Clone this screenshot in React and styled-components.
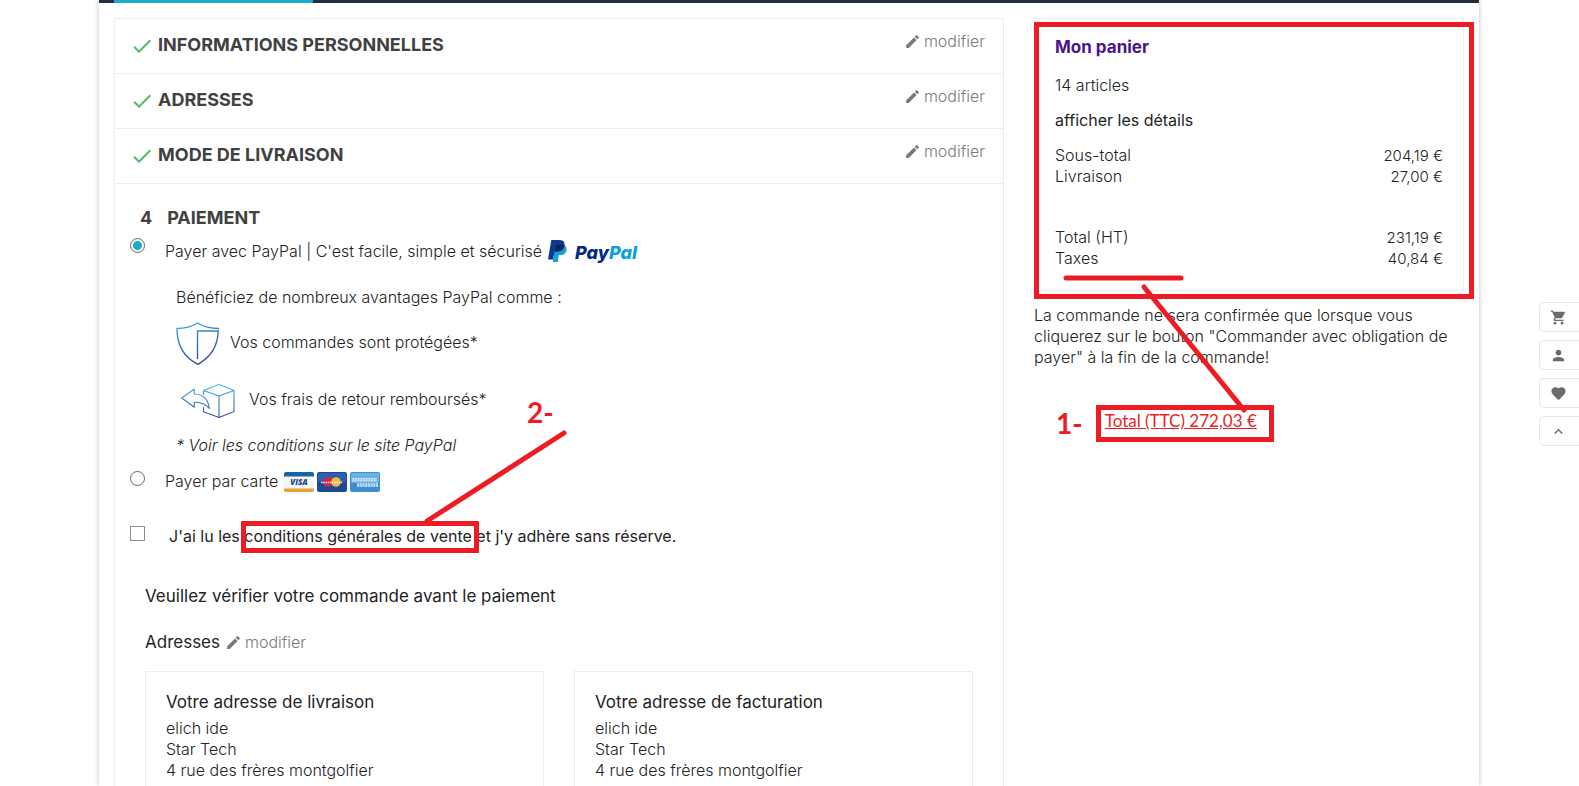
import React from "react";
import styled, { createGlobalStyle, css } from "styled-components";
import {
  MdDone,
  MdEdit,
  MdShoppingCart,
  MdPerson,
  MdFavorite,
  MdKeyboardArrowUp,
} from "react-icons/md";

const RED = "#ed1c24";
const LINE = "#ececec";

const GlobalStyle = createGlobalStyle`
  *, *::before, *::after { box-sizing: border-box; }
  body {
    margin: 0;
    padding-right: 1px;
    background: #fff;
    color: #232323;
    font: 300 16px/21px Inter, "Open Sans", sans-serif;
  }
  h1, h2, h3, p, dl, dd, dt, address { margin: 0; font-style: normal; }
  a { color: inherit; text-decoration: none; }
`;

const Page = styled.div`
  max-width: 1380px;
  min-height: 100vh;
  margin: 0 auto;
  background: #fff;
  box-shadow: 0 0 5px rgba(0, 0, 0, 0.25);
`;

const NavBar = styled.div`
  height: 3px;
  padding-left: 15px;
  background: #232f3e;
`;

const NavActive = styled.div`
  width: 199px;
  height: 3px;
  background: #1aaccb;
`;

const Columns = styled.div`
  display: grid;
  grid-template-columns: 2fr 1fr;
  padding-top: 15px;
`;

const MainColumn = styled.main`
  min-width: 0;
  padding: 0 15px;
`;

const SideColumn = styled.aside`
  min-width: 0;
  padding: 0 15px;
`;

const Steps = styled.div`
  border: 1px solid ${LINE};
  border-bottom: 0;
`;

const StepRow = styled.section`
  display: flex;
  align-items: center;
  gap: 4px;
  height: 55px;
  padding: 0 18px 0 15px;
  border-bottom: 1px solid ${LINE};
  > svg { color: #4cbb6c; }
`;

const StepTitle = styled.h1`
  padding-bottom: 3px;
  font-size: 18px;
  line-height: 24px;
  font-weight: 700;
  color: #414141;
`;

const EditLink = styled.a`
  display: inline-flex;
  align-items: center;
  gap: 3px;
  color: #7a7a7a;
  ${(p) => p.$corner && css`
    align-self: flex-start;
    margin: 12px 0 0 auto;
  `}
`;

const Payment = styled.section`
  padding: 22px 15px 0;
`;

const PaymentTitle = styled(StepTitle)`
  display: flex;
  gap: 15px;
  padding-left: 10px;
  margin-bottom: 5px;
`;

const Choice = styled.div`
  position: relative;
  display: flex;
  align-items: flex-start;
  gap: ${(p) => p.$gap || 20}px;
  margin-top: ${(p) => p.$top || 0}px;
`;

const Radio = styled.input.attrs({ type: "radio", name: "payment" })`
  appearance: none;
  flex: none;
  width: 15px;
  height: 15px;
  margin: 0;
  border: 1px solid #666;
  border-radius: 50%;
  &:checked { background: radial-gradient(circle, #1aaccb 4px, #fff 5px); }
`;

const Checkbox = styled.input.attrs({ type: "checkbox" })`
  appearance: none;
  flex: none;
  width: 15px;
  height: 15px;
  margin: 0;
  border: 1px solid #8c8c8c;
`;

const ChoiceLabel = styled.label`
  display: flex;
  align-items: center;
  gap: 6px;
  padding-top: ${(p) => p.$top || 0}px;
`;

const TermsLabel = styled.label`
  font-weight: 400;
`;

const TermsLink = styled.a`
  position: relative;
  &::after {
    content: "";
    position: absolute;
    inset: -5px -7px -7px -3px;
    border: 5px solid ${RED};
  }
`;

const Benefits = styled.div`
  padding: 25px 0 0 46px;
`;

const Benefit = styled.p`
  display: flex;
  align-items: center;
  gap: ${(p) => p.$gap}px;
  margin-top: ${(p) => p.$top}px;
  padding-left: ${(p) => p.$left || 0}px;
  span { padding-bottom: 3px; }
`;

const Footnote = styled.p`
  margin-top: 17px;
  font-style: italic;
`;

const CardList = styled.span`
  display: flex;
  gap: 3px;
`;

const PayPalBrand = styled.span`
  display: flex;
  align-items: center;
  gap: 8px;
`;

const PayPalName = styled.strong`
  padding-top: 3px;
  font-size: 18px;
  line-height: 19px;
  font-weight: 800;
  font-style: italic;
  color: #012b82;
  span { color: #0d9fe0; }
`;

const Review = styled.section`
  padding: 39px 15px 0;
`;

const ReviewTitle = styled.h2`
  font-size: 17px;
  line-height: 21px;
  font-weight: 400;
`;

const ReviewLine = styled.div`
  display: flex;
  gap: 5px;
  margin: 25px 0 18px;
`;

const AddressGrid = styled.div`
  display: grid;
  grid-template-columns: 1fr 1fr;
  gap: 30px;
`;

const AddressCard = styled.article`
  padding: 20px 20px 5px;
  border: 1px solid ${LINE};
  border-bottom: 0;
  address { margin-top: 5px; }
`;

const Cart = styled.section`
  position: relative;
  padding: 18px 20px 21px;
  border: 1px solid ${LINE};
  &::after {
    content: "";
    position: absolute;
    inset: 3px -11px -9px -1px;
    border: 5px solid ${RED};
    pointer-events: none;
  }
`;

const CartTitle = styled.h2`
  font-size: 17px;
  line-height: 21px;
  font-weight: 700;
  color: #4b1489;
`;

const CartCount = styled.p`
  margin: 17px 0 14px;
`;

const DetailsLink = styled.a`
  display: block;
  font-weight: 400;
`;

const Amounts = styled.dl`
  margin-top: ${(p) => p.$top}px;
`;

const Amount = styled.div`
  display: flex;
  justify-content: space-between;
  dd { font-size: 15px; }
`;

const Notice = styled.p`
  margin-top: 14px;
`;

const Callout = styled.div`
  display: flex;
  align-items: flex-start;
  gap: 13px;
  margin-top: 37px;
  padding-left: 22px;
`;

const CalloutNumber = styled.strong`
  font: 700 28px/36px Lato, sans-serif;
  color: ${RED};
`;

const CalloutBox = styled.span`
  height: 37px;
  padding: 0 12px 0 4px;
  border: 5px solid ${RED};
  font: 400 17px/22px Lato, sans-serif;
  color: ${RED};
  text-decoration: underline;
  white-space: nowrap;
`;

const Stroke = styled.svg`
  position: absolute;
  left: ${(p) => p.$left}px;
  top: ${(p) => p.$top}px;
  overflow: visible;
  pointer-events: none;
  z-index: 1;
  stroke: ${RED};
  stroke-width: 5;
  stroke-linecap: round;
`;

const FloatingNumber = styled(CalloutNumber)`
  position: absolute;
  left: 397px;
  top: -132px;
`;

const QuickBar = styled.nav`
  position: fixed;
  right: 0;
  top: 302px;
  display: grid;
  gap: 8px;
`;

const QuickButton = styled.button`
  display: flex;
  align-items: center;
  justify-content: center;
  width: 40px;
  height: 30px;
  padding: 0 2px 0 0;
  border: 1px solid #e8e8e8;
  border-right: 0;
  border-radius: 5px 0 0 5px;
  background: #fff;
  color: #6b6b6b;
`;

function PayPalMark() {
  return (
    <svg width="19" height="22" viewBox="0 0 19 22" aria-hidden="true">
      <path d="M7 5h8.500c2.400.8 3.500 2.500 3 5.100-.7 3.700-3 5-6.400 5h-1.200l-1.200 6.900H4.800z" fill="#159fdf" />
      <path d="M3.300 0h7.900c4 0 5.900 1.900 5.200 5.600-.7 4-3.300 5.800-7.200 5.800H6.500L5 19.500H0z" fill="#0a3a8c" />
      <path d="M8.200 5h8.200c-.3 4.600-3.200 6.500-7.200 6.400H7z" fill="#041f5c" />
    </svg>
  );
}

function Shield() {
  return (
    <svg width="43" height="43" viewBox="0 0 43 43" fill="none" stroke="url(#shieldInk)" strokeWidth="1.400" aria-hidden="true">
      <defs>
        <linearGradient id="shieldInk" gradientUnits="userSpaceOnUse" x1="8" y1="0" x2="22" y2="43">
          <stop offset="0" stopColor="#36b1dc" />
          <stop offset=".5" stopColor="#3277b3" />
          <stop offset="1" stopColor="#30479b" />
        </linearGradient>
      </defs>
      <path d="M43 6.500C34 6.500 28 5 21.500 1 15 5 9 6.500 1 6.500 1 22 7 35 22 42.300 36 34 41.500 24 42.300 9H21.500v28" />
    </svg>
  );
}

function ReturnParcel() {
  return (
    <svg width="54" height="34" viewBox="0 0 54 34" fill="none" stroke="url(#parcelInk)" strokeWidth="1.100" strokeLinejoin="round" aria-hidden="true">
      <defs>
        <linearGradient id="parcelInk" gradientUnits="userSpaceOnUse" x1="0" y1="0" x2="0" y2="34">
          <stop offset="0" stopColor="#4fc0e4" />
          <stop offset=".5" stopColor="#3f7fba" />
          <stop offset="1" stopColor="#3a4a99" />
        </linearGradient>
      </defs>
      <path d="M22.500 11V6.500l15.500-6 15 6v21L38 33.400l-15.500-5.600V23M22.500 6.500 38 12l15-5.500M38 12v21.400" />
      <path d="M.7 14 13.300 5v5c8 .4 14 4.500 15 14.500-4-5-8-6.600-15-6.200v5z" />
    </svg>
  );
}

function VisaCard() {
  return (
    <svg width="30" height="20" viewBox="0 0 30 20" role="img" aria-label="Visa">
      <rect width="30" height="20" rx="2" fill="#f6f6f4" />
      <path d="M0 4.500V2a2 2 0 0 1 2-2h26a2 2 0 0 1 2 2v2.500z" fill="#17649f" />
      <path d="M0 16.500V18a2 2 0 0 0 2 2h26a2 2 0 0 0 2-2v-1.500z" fill="#eb9f32" />
      <text x="15" y="13" textAnchor="middle" fontFamily="Open Sans, sans-serif" fontSize="8" fontWeight="800" fontStyle="italic" fill="#1b4a86">VISA</text>
    </svg>
  );
}

function MasterCard() {
  return (
    <svg width="30" height="20" viewBox="0 0 30 20" role="img" aria-label="MasterCard">
      <rect width="30" height="20" rx="2" fill="#1d4a92" />
      <rect x="1" y="1" width="28" height="9" rx="1" fill="#2c62ad" />
      <circle cx="11" cy="10" r="4.800" fill="#d8243c" />
      <circle cx="19" cy="10" r="4.800" fill="#f3b83c" />
      <path d="M4 10.500h22" stroke="#f4e9ea" strokeWidth="1.600" strokeDasharray="1.500 .7" />
    </svg>
  );
}

function AmexCard() {
  return (
    <svg width="30" height="20" viewBox="0 0 30 20" role="img" aria-label="American Express">
      <rect width="30" height="20" rx="2" fill="#3f8fd0" />
      <rect x="1" y="1" width="28" height="10" rx="1" fill="#69b3e6" />
      <path d="M2 7.800h25M7 13h21" stroke="#d5eafa" strokeWidth="3.400" strokeDasharray="2.100 .6" />
      <path d="M2 7.800h25M7 13h21" stroke="#5aa3da" strokeWidth="1" strokeDasharray="1 1.700" />
    </svg>
  );
}

const doneSteps = ["INFORMATIONS PERSONNELLES", "ADRESSES", "MODE DE LIVRAISON"];
const addresses = ["Votre adresse de livraison", "Votre adresse de facturation"];
const quickActions = [
  ["Panier", MdShoppingCart],
  ["Compte", MdPerson],
  ["Favoris", MdFavorite],
  ["Haut de page", MdKeyboardArrowUp],
];

function Edit({ corner }) {
  return (
    <EditLink href="#modifier" $corner={corner}>
      <MdEdit size={17} />
      modifier
    </EditLink>
  );
}

function AmountRow({ label, value }) {
  return (
    <Amount>
      <dt>{label}</dt>
      <dd>{value}</dd>
    </Amount>
  );
}

export default function App() {
  return (
    <>
      <GlobalStyle />
      <Page>
        <NavBar><NavActive /></NavBar>
        <Columns>
          <MainColumn>
            <Steps>
              {doneSteps.map((title) => (
                <StepRow key={title}>
                  <MdDone size={24} />
                  <StepTitle>{title}</StepTitle>
                  <Edit corner />
                </StepRow>
              ))}
              <Payment>
                <PaymentTitle><span>4</span>PAIEMENT</PaymentTitle>
                <Choice>
                  <Radio id="paypal" defaultChecked />
                  <ChoiceLabel htmlFor="paypal" $top={2}>
                    Payer avec PayPal | C'est facile, simple et sécurisé
                    <PayPalBrand>
                      <PayPalMark />
                      <PayPalName>Pay<span>Pal</span></PayPalName>
                    </PayPalBrand>
                  </ChoiceLabel>
                </Choice>
                <Benefits>
                  <p>Bénéficiez de nombreux avantages PayPal comme :</p>
                  <Benefit $top={14} $gap={11}><Shield /><span>Vos commandes sont protégées*</span></Benefit>
                  <Benefit $top={19} $gap={14} $left={5}><ReturnParcel /><span>Vos frais de retour remboursés*</span></Benefit>
                  <Footnote>* Voir les conditions sur le site PayPal</Footnote>
                </Benefits>
                <Choice $top={15}>
                  <Radio id="card" />
                  <ChoiceLabel htmlFor="card">
                    Payer par carte
                    <CardList><VisaCard /><MasterCard /><AmexCard /></CardList>
                  </ChoiceLabel>
                </Choice>
                <Choice $top={34} $gap={24}>
                  <Checkbox id="terms" />
                  <TermsLabel htmlFor="terms">
                    J'ai lu les <TermsLink href="#conditions">conditions générales de vente</TermsLink> et j'y adhère sans réserve.
                  </TermsLabel>
                  <FloatingNumber>2-</FloatingNumber>
                  <Stroke $left={297} $top={-93} width="137" height="88"><path d="M0 88 137 0" /></Stroke>
                </Choice>
                <Review>
                  <ReviewTitle>Veuillez vérifier votre commande avant le paiement</ReviewTitle>
                  <ReviewLine>
                    <ReviewTitle as="h3">Adresses</ReviewTitle>
                    <Edit />
                  </ReviewLine>
                  <AddressGrid>
                    {addresses.map((title) => (
                      <AddressCard key={title}>
                        <ReviewTitle as="h3">{title}</ReviewTitle>
                        <address>
                          elich ide<br />Star Tech<br />4 rue des frères montgolfier
                        </address>
                      </AddressCard>
                    ))}
                  </AddressGrid>
                </Review>
              </Payment>
            </Steps>
          </MainColumn>
          <SideColumn>
            <Cart>
              <CartTitle>Mon panier</CartTitle>
              <CartCount>14 articles</CartCount>
              <DetailsLink href="#details">afficher les détails</DetailsLink>
              <Amounts $top={14}>
                <AmountRow label="Sous-total" value="204,19 €" />
                <AmountRow label="Livraison" value="27,00 €" />
              </Amounts>
              <Amounts $top={40}>
                <AmountRow label="Total (HT)" value="231,19 €" />
                <AmountRow label="Taxes" value="40,84 €" />
              </Amounts>
              <Stroke $left={31} $top={259} width="116" height="132">
                <path d="M0 0H115M78 9 178 132" />
              </Stroke>
            </Cart>
            <Notice>
              La commande ne sera confirmée que lorsque vous cliquerez sur le
              bouton "Commander avec obligation de payer" à la fin de la commande!
            </Notice>
            <Callout>
              <CalloutNumber>1-</CalloutNumber>
              <CalloutBox>Total (TTC) 272,03 €</CalloutBox>
            </Callout>
          </SideColumn>
        </Columns>
      </Page>
      <QuickBar>
        {quickActions.map(([label, Icon]) => (
          <QuickButton key={label} type="button" aria-label={label}><Icon size={17} /></QuickButton>
        ))}
      </QuickBar>
    </>
  );
}
